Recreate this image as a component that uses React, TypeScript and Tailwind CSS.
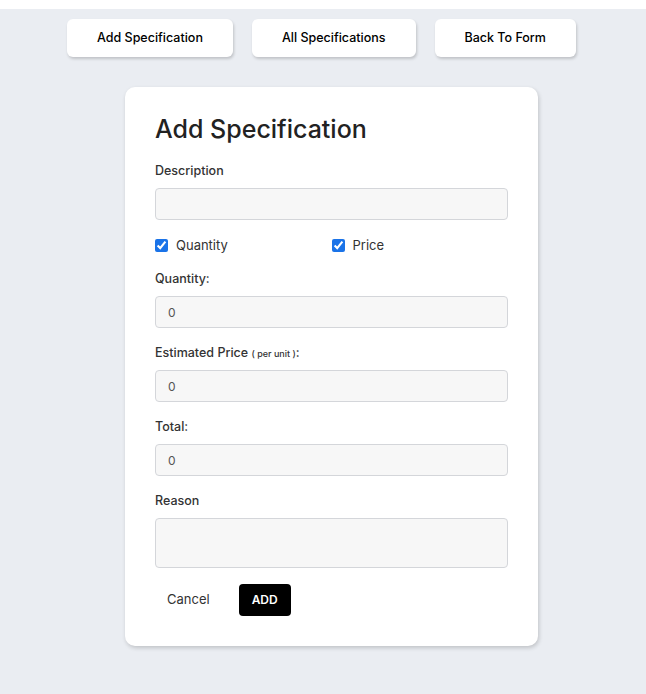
const font = { fontFamily: '"Inter", "Liberation Sans", sans-serif' };

function Field({ label, value }: { label: React.ReactNode; value?: string }) {
  return (
    <div className="mb-[16px]">
      <label className="block text-[12.5px] leading-[18px] font-medium text-[#333]">{label}</label>
      <input
        readOnly
        value={value ?? ""}
        className="mt-[8px] block h-[32px] w-full rounded-[4px] border border-[#d4d6da] bg-[#f7f7f7] px-[12px] text-[12px] text-[#555] outline-none"
      />
    </div>
  );
}

export default function App() {
  return (
    <div className="min-h-[694px] bg-[#eaedf2]" style={font}>
      <div className="h-[9px] w-full bg-white" />

      <div className="mt-[10px] flex justify-center gap-[19px] pr-[3px]">
        {["Add Specification", "All Specifications", "Back To Form"].map((t) => (
          <button
            key={t}
            className="h-[38px] rounded-[6px] bg-white px-[30px] text-[12.5px] font-medium text-black shadow-[1px_2px_3px_rgba(0,0,0,0.18)]"
          >
            {t}
          </button>
        ))}
      </div>

      <div className="ml-[125px] mt-[30px] w-[413px] rounded-[10px] bg-white px-[30px] pt-[26px] pb-[30px] shadow-[1px_2px_4px_rgba(0,0,0,0.18)]">
        <h1 className="text-[25px] leading-[32px] font-medium text-[#222]">Add Specification</h1>

        <div className="mt-[17px]">
          <label className="block text-[12.5px] leading-[18px] font-medium text-[#333]">Description</label>
          <input
            readOnly
            className="mt-[8px] block h-[32px] w-full rounded-[4px] border border-[#d4d6da] bg-[#f7f7f7] px-[12px] outline-none"
          />
        </div>

        <div className="mt-[16px] mb-[16px] grid grid-cols-2 text-[13px] leading-[18px] text-[#333]">
          <label className="flex items-center gap-[8px]">
            <input type="checkbox" defaultChecked className="m-0 h-[13px] w-[13px] accent-[#1a73e8]" />
            Quantity
          </label>
          <label className="flex items-center gap-[8px]">
            <input type="checkbox" defaultChecked className="m-0 h-[13px] w-[13px] accent-[#1a73e8]" />
            Price
          </label>
        </div>

        <Field label="Quantity:" value="0" />
        <Field
          label={
            <>
              Estimated Price <span className="text-[9px] leading-none">( per unit )</span>:
            </>
          }
          value="0"
        />
        <Field label="Total:" value="0" />

        <div>
          <label className="block text-[12.5px] leading-[18px] font-medium text-[#333]">Reason</label>
          <textarea
            readOnly
            className="mt-[8px] block h-[50px] w-full resize-none rounded-[4px] border border-[#d4d6da] bg-[#f7f7f7] outline-none"
          />
        </div>

        <div className="mt-[16px] flex items-center gap-[17px]">
          <button className="px-[12px] text-[13px] text-[#333]">Cancel</button>
          <button className="h-[32px] rounded-[4px] bg-black px-[13px] text-[12px] font-semibold text-white">ADD</button>
        </div>
      </div>
    </div>
  );
}
